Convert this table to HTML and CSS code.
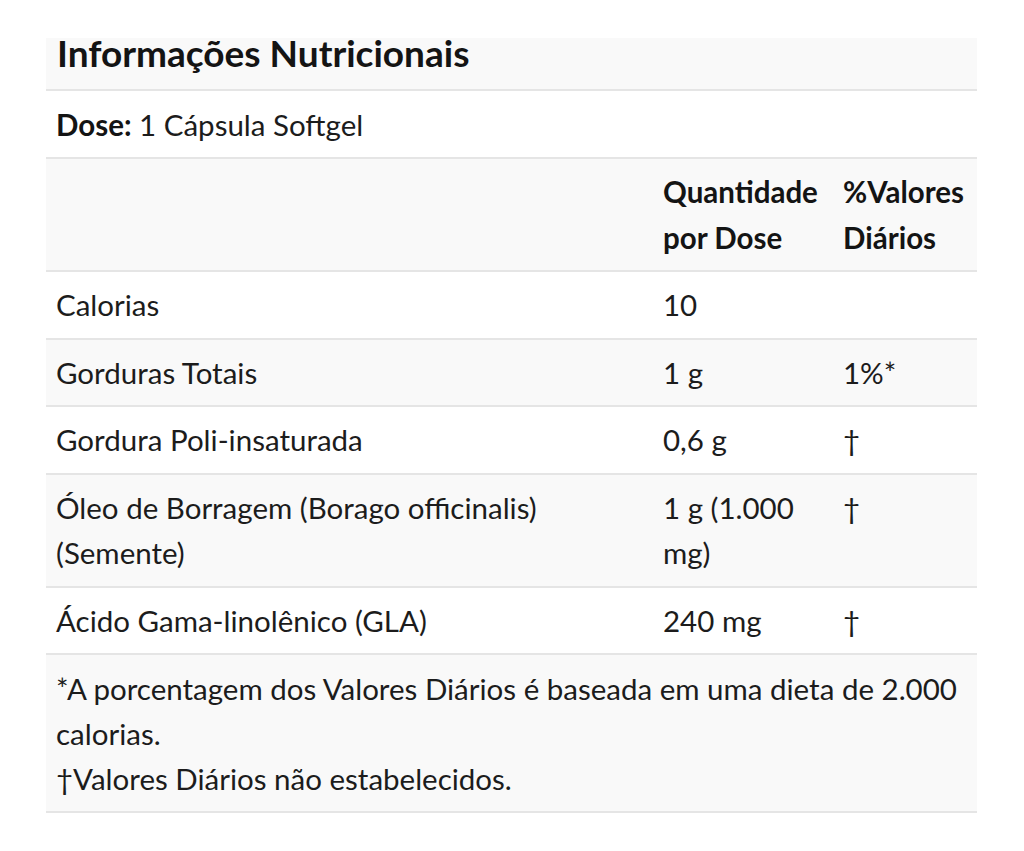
FILE: index.html
```html
<!DOCTYPE html>
<html lang="pt-BR">
<head>
<meta charset="utf-8">
<title>Informações Nutricionais</title>
<link rel="stylesheet" href="styles.css">
</head>
<body>
<section class="facts">
  <h2 class="facts-title">Informações Nutricionais</h2>
  <div class="facts-dose"><strong>Dose:</strong> 1 Cápsula Softgel</div>
  <table class="facts-table">
    <colgroup>
      <col class="col-name">
      <col class="col-qty">
      <col class="col-dv">
    </colgroup>
    <thead>
      <tr class="shade">
        <th></th>
        <th>Quantidade por Dose</th>
        <th>%Valores Diários</th>
      </tr>
    </thead>
    <tbody>
      <tr>
        <td>Calorias</td>
        <td>10</td>
        <td></td>
      </tr>
      <tr class="shade">
        <td>Gorduras Totais</td>
        <td>1 g</td>
        <td>1%*</td>
      </tr>
      <tr>
        <td>Gordura Poli-insaturada</td>
        <td>0,6 g</td>
        <td>†</td>
      </tr>
      <tr class="shade">
        <td>Óleo de Borragem (Borago officinalis) (Semente)</td>
        <td>1 g (1.000 mg)</td>
        <td>†</td>
      </tr>
      <tr>
        <td>Ácido Gama-linolênico (GLA)</td>
        <td>240 mg</td>
        <td>†</td>
      </tr>
      <tr class="shade">
        <td colspan="3" class="note">*A porcentagem dos Valores Diários é baseada em uma dieta de 2.000 calorias.<br>†Valores Diários não estabelecidos.</td>
      </tr>
    </tbody>
  </table>
</section>
</body>
</html>
```
FILE: styles.css
```css
html, body {
  margin: 0;
  padding: 0;
  background: #ffffff;
}

body {
  font-family: Lato, "Open Sans", "Liberation Sans", sans-serif;
  color: #1c1c1c;
  padding: 38px 47px 0 46px;
}

.facts {
  width: 931px;
}

.facts-title {
  margin: 0;
  background: #f9f9f9;
  font-size: 37px;
  font-weight: 700;
  line-height: 30px;
  padding: 0 10px 21px 11px;
  border-bottom: 2px solid #e5e5e5;
  color: #141414;
}

.facts-dose {
  font-size: 29.5px;
  line-height: 46px;
  padding: 11px 10px 9px 10px;
  border-bottom: 2px solid #e5e5e5;
}

.facts-dose strong {
  font-weight: 700;
  color: #141414;
}

.facts-table {
  width: 100%;
  border-collapse: collapse;
  table-layout: fixed;
  font-size: 29.5px;
  line-height: 45.5px;
}

.col-name { width: 607px; }
.col-qty { width: 180px; }
.col-dv { width: 144px; }

.facts-table th,
.facts-table td {
  text-align: left;
  vertical-align: top;
  padding: 10px 2px 10px 10px;
  border-bottom: 2px solid #e5e5e5;
}

.facts-table th {
  font-weight: 700;
  color: #141414;
  line-height: 46px;
  padding-top: 10px;
  padding-bottom: 9px;
}

.shade {
  background: #f9f9f9;
}

.facts-table td.note {
  padding: 11px 4px 10px 10px;
  line-height: 45px;
}
```
